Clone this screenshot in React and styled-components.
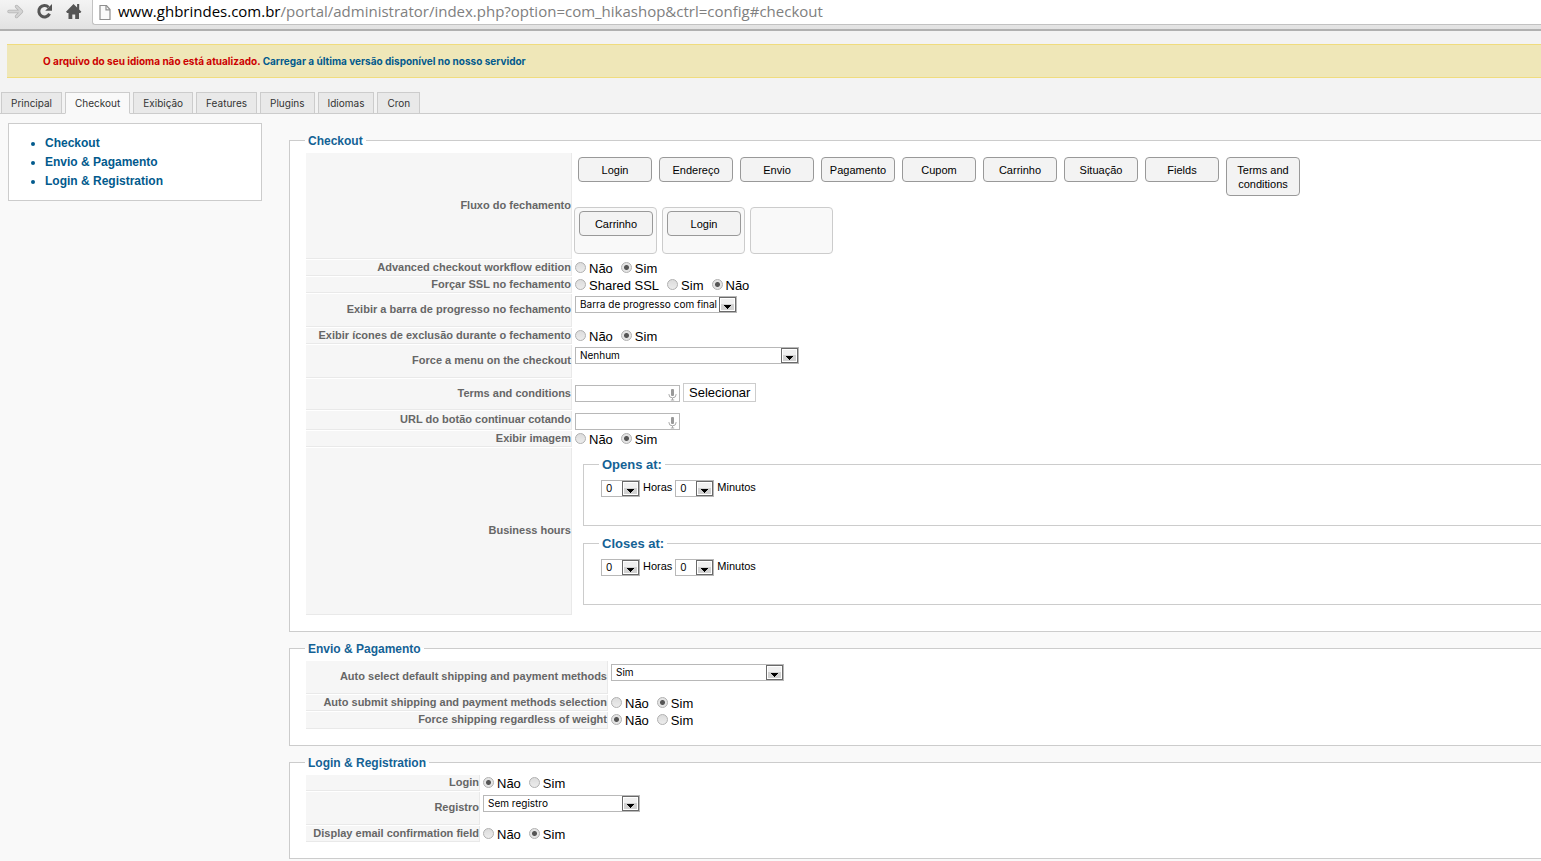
import {useId, useState} from 'react'
import styled, {createGlobalStyle} from 'styled-components'

const wideFont = 'Inter, "Liberation Sans", sans-serif'

const GlobalStyle = createGlobalStyle`
  * {
    box-sizing: border-box;
  }

  body {
    margin: 0;
    background: #f9f9f9;
    color: #000;
    font-family: "Liberation Sans", Arial, sans-serif;
    font-size: 11px;
    overflow-x: hidden;
  }

  button, input, select {
    font-family: inherit;
    margin: 0;
  }
`

const Toolbar = styled.div`
  display: flex;
  align-items: flex-start;
  height: 31px;
  padding-left: 7px;
  background: linear-gradient(#f4f4f4, #e2e2e2);
  border-bottom: 2px solid #b0b0b0;
`

const ToolButton = styled.button`
  width: 17px;
  height: 24px;
  margin-right: 12px;
  padding: 0;
  border: 0;
  background: none;

  svg {
    display: block;
  }
`

const AddressBar = styled.div`
  flex: 1;
  display: flex;
  align-items: center;
  gap: 7px;
  height: 25px;
  margin-left: -2px;
  padding-left: 6px;
  background: #fff;
  border: 1px solid #c2c2c2;
  border-width: 0 0 1px 1px;
  border-radius: 0 0 0 3px;
`

const Address = styled.div`
  padding-bottom: 2px;
  color: #808080;
  font-family: "Open Sans", "Noto Sans", sans-serif;
  font-size: 15px;
  line-height: 22px;
  white-space: nowrap;

  span {
    color: #000;
  }
`

const Header = styled.header`
  padding-top: 13px;
  background: #f3f3f3;
`

const Warning = styled.div`
  margin-left: 7px;
  padding: 0 36px;
  background: #efe7b8;
  border: 1px solid #f0dc7e;
  border-width: 1px 0;
  color: #c00;
  font-family: ${wideFont};
  font-size: 10px;
  font-weight: bold;
  line-height: 32px;

  a {
    color: #025a8d;
    text-decoration: none;
  }
`

const Tabs = styled.div`
  display: flex;
  gap: 3px;
  margin-top: 14px;
  padding-left: 1px;
  border-bottom: 1px solid #ccc;
`

const Tab = styled.button`
  height: 22px;
  margin-bottom: -1px;
  padding: 0 9px;
  background: ${props => props.$active ? '#f9f9f9' : '#e9e9e9'};
  border: 1px solid #ccc;
  border-bottom-color: ${props => props.$active ? '#f9f9f9' : '#ccc'};
  color: #333;
  font-family: ${wideFont};
  font-size: 10px;
`

const Content = styled.main`
  display: flex;
  align-items: flex-start;
  gap: 27px;
  padding: 9px 0 2px 8px;
`

const Sidebar = styled.nav`
  flex: 0 0 254px;
  background: #fff;
  border: 1px solid #ccc;

  ul {
    margin: 0;
    padding: 10px 0 9px 36px;
  }

  li {
    color: #025a8d;
    font-size: 12px;
    font-weight: bold;
    line-height: 19px;
  }

  a {
    color: #025a8d;
    text-decoration: none;
  }
`

const Sections = styled.form`
  flex: 1;
  min-width: 0;
  display: flex;
  flex-direction: column;
  gap: 9px;
  padding-top: 10px;
`

const Section = styled.fieldset`
  min-width: 0;
  margin: 0;
  padding: 4px 0 15px 15px;
  background: #fff;
  border: 1px solid #ccc;
  border-right: 0;

  legend {
    padding: 1px 3px 0;
    color: #146295;
    font-size: 12px;
    font-weight: bold;
    line-height: 14px;
  }
`

const Table = styled.table`
  width: 100%;
  border-collapse: separate;
  border-spacing: 1px;
`

const Row = styled.tr`
  height: ${props => props.$height}px;
`

const LabelCell = styled.th`
  width: ${props => props.$width}px;
  padding: 0 0 1px;
  background: #f6f6f6;
  border: 1px solid #e9e9e9;
  border-width: 0 1px 1px 0;
  color: #666;
  font-size: 11px;
  font-weight: bold;
  line-height: 13px;
  text-align: right;
  white-space: nowrap;
`

const ValueCell = styled.td`
  padding: ${props => props.$top || 0}px 0 0 2px;
  vertical-align: top;
`

const Radios = styled.div`
  display: flex;
  gap: 8px;
  height: 16px;
`

const RadioLabel = styled.label`
  display: flex;
  align-items: flex-start;
  gap: 3px;
  font-size: 13px;
  line-height: 18px;
`

const Radio = styled.input`
  appearance: none;
  width: 11px;
  height: 11px;
  margin-top: 2px;
  border: 1px solid #b0b0b0;
  border-radius: 50%;
  background: linear-gradient(#dcdcdc, #ececec);

  &:checked {
    background: radial-gradient(circle, #555 0 2px, #e4e4e4 3px);
  }
`

const SelectBox = styled.span`
  position: relative;
  display: inline-block;
  width: ${props => props.$width}px;
  height: 17px;

  select {
    display: block;
    appearance: none;
    width: 100%;
    height: 17px;
    padding: 0 18px 0 4px;
    background: #fff;
    border: 1px solid #b8b8b8;
    border-radius: 0;
    color: #000;
    font-family: ${wideFont};
    font-size: 10px;
    line-height: 15px;
  }

  svg {
    position: absolute;
    top: 1px;
    right: 1px;
    pointer-events: none;
  }
`

const FieldLine = styled.div`
  display: flex;
  align-items: flex-end;
  gap: 3px;
`

const TextBox = styled.span`
  position: relative;
  width: 105px;
  height: 17px;

  input {
    display: block;
    width: 100%;
    height: 17px;
    padding: 0 16px 0 4px;
    border: 1px solid #b8b8b8;
    font-size: 11px;
  }

  svg {
    position: absolute;
    top: 4px;
    right: 3px;
  }
`

const PlainButton = styled.button`
  height: 19px;
  padding: 0 5px;
  background: #fff;
  border: 1px solid #ccc;
  font-size: 13px;
  line-height: 17px;
`

const Steps = styled.div`
  display: flex;
  flex-wrap: wrap;
  align-items: flex-start;
  gap: 7px;
  min-height: 50px;
  padding-left: 3px;
`

const Step = styled.button`
  display: block;
  width: 74px;
  padding: 5px 6px 4px;
  background: #f3f3f3;
  border: 1px solid #999;
  border-radius: 4px;
  color: #000;
  font-size: 11px;
  line-height: 14px;
`

const Flow = styled.div`
  display: flex;
  gap: 5px;
  margin-left: -1px;
`

const DropZone = styled.div`
  width: 83px;
  height: 47px;
  padding: 3px 4px;
  background: #f9f9f9;
  border: 1px solid #ccc;
  border-radius: 4px;
`

const HoursGroup = styled.fieldset`
  min-width: 0;
  height: 70px;
  margin: 0 -1px 9px 8px;
  padding: 7px 0 0 15px;
  border: 1px solid #ccc;
  border-right: 0;

  legend {
    padding: 0 3px;
    color: #146295;
    font-size: 13px;
    font-weight: bold;
    line-height: 17px;
  }
`

const HoursLine = styled.div`
  display: flex;
  gap: 3px;
  padding-left: 2px;
  font-size: 11px;
  line-height: 15px;
`

const ForwardIcon = () => (
  <svg width="17" height="24" viewBox="0 0 17 24">
    <path d="M2 11.5h12M9.5 6.5l5 5-5 5" fill="none" stroke="#b5b5b5" strokeWidth="3.4" strokeLinecap="round" strokeLinejoin="round" />
    <path d="M2 11.5h12M9.5 6.5l5 5-5 5" fill="none" stroke="#d4d4d4" strokeWidth="1.8" strokeLinecap="round" strokeLinejoin="round" />
  </svg>
)

const ReloadIcon = () => (
  <svg width="17" height="24" viewBox="0 0 17 24">
    <path d="M12.6 7.2A5.7 5.7 0 1 0 13.6 13.8" fill="none" stroke="#555" strokeWidth="3" />
    <path d="M16 4v6.8H9.2z" fill="#555" />
  </svg>
)

const HomeIcon = () => (
  <svg width="17" height="24" viewBox="0 0 17 24">
    <path d="M8.5 4L1 11.8l1.2 1.2h1.3v6h3.8v-4.6h2.9V19H14v-6h1.2l1.2-1.2-2.2-2.3V4h-2.1v3.4z" fill="#555" />
  </svg>
)

const PageIcon = () => (
  <svg width="12" height="17" viewBox="0 0 12 17">
    <path d="M1 1.5h6.5l3.5 4v10H1z" fill="#fafafa" stroke="#8f8f8f" strokeWidth="1.2" />
    <path d="M7 1.5v4.4h4" fill="none" stroke="#8f8f8f" strokeWidth="1.2" />
  </svg>
)

const MicIcon = () => (
  <svg width="9" height="12" viewBox="0 0 9 12">
    <rect x="3" y="0" width="3" height="7" rx="1" fill="#999" />
    <path d="M1 5v.8a3.5 3 0 0 0 7 0V5M4.5 9v2M2.8 11h3.4" fill="none" stroke="#aaa" strokeWidth="1" />
  </svg>
)

const ArrowIcon = () => (
  <svg width="17" height="15" viewBox="0 0 17 15">
    <rect x=".5" y=".5" width="16" height="14" fill="#fff" stroke="#6a6a6a" />
    <rect x="2" y="2" width="13" height="5" fill="#f0f0f0" />
    <rect x="2" y="7" width="13" height="6" fill="#d2d2d2" />
    <path d="M5 8h7v1h-1v1h-1v1H9v1H8v-1H7v-1H6V9H5z" fill="#000" />
  </svg>
)

const Select = ({value, width, label, id}) => (
  <SelectBox $width={width}>
    <select id={id} aria-label={label}>
      <option>{value}</option>
    </select>
    <ArrowIcon />
  </SelectBox>
)

const RadioGroup = ({options, checked, label}) => {
  const name = useId()
  const [value, setValue] = useState(checked)

  return (
    <Radios role="radiogroup" aria-label={label}>
      {options.map(option =>
        <RadioLabel key={option}>
          <Radio type="radio" name={name} checked={value === option} onChange={() => setValue(option)} />
          {option}
        </RadioLabel>
      )}
    </Radios>
  )
}

const TextField = ({id}) => (
  <TextBox>
    <input id={id} type="text" />
    <MicIcon />
  </TextBox>
)

const Field = ({label, labelWidth, height, top, htmlFor, children}) => (
  <Row $height={height}>
    <LabelCell scope="row" $width={labelWidth}>
      {htmlFor ? <label htmlFor={htmlFor}>{label}</label> : label}
    </LabelCell>
    <ValueCell $top={top}>{children}</ValueCell>
  </Row>
)

const RadioField = ({label, labelWidth, checked, options = ['Não', 'Sim'], height = 16}) => (
  <Field label={label} labelWidth={labelWidth} height={height}>
    <RadioGroup label={label} options={options} checked={checked} />
  </Field>
)

const SelectField = ({id, label, labelWidth, value, width, top = 3}) => (
  <Field label={label} labelWidth={labelWidth} height={33} top={top} htmlFor={id}>
    <Select id={id} value={value} width={width} />
  </Field>
)

const Hours = ({title}) => (
  <HoursGroup>
    <legend>{title}</legend>
    <HoursLine>
      <Select value="0" width={39} label={`${title} horas`} />
      Horas
      <Select value="0" width={39} label={`${title} minutos`} />
      Minutos
    </HoursLine>
  </HoursGroup>
)

const tabs = ['Principal', 'Checkout', 'Exibição', 'Features', 'Plugins', 'Idiomas', 'Cron']

const steps = ['Login', 'Endereço', 'Envio', 'Pagamento', 'Cupom', 'Carrinho', 'Situação', 'Fields', 'Terms and conditions']

const CheckoutSection = () => (
  <Section id="checkout">
    <legend>Checkout</legend>
    <Table>
      <tbody>
        <Field label="Fluxo do fechamento" labelWidth={266} height={106} top={4}>
          <Steps>
            {steps.map(step => <Step type="button" key={step}>{step}</Step>)}
          </Steps>
          <Flow>
            <DropZone><Step type="button">Carrinho</Step></DropZone>
            <DropZone><Step type="button">Login</Step></DropZone>
            <DropZone />
          </Flow>
        </Field>
        <RadioField label="Advanced checkout workflow edition" checked="Sim" />
        <RadioField label="Forçar SSL no fechamento" options={['Shared SSL', 'Sim', 'Não']} checked="Não" />
        <SelectField id="bar" label="Exibir a barra de progresso no fechamento" value="Barra de progresso com final" width={162} top={2} />
        <RadioField label="Exibir ícones de exclusão durante o fechamento" checked="Sim" />
        <SelectField id="menu" label="Force a menu on the checkout" value="Nenhum" width={224} top={2} />
        <Field label="Terms and conditions" height={31} top={4} htmlFor="terms">
          <FieldLine>
            <TextField id="terms" />
            <PlainButton type="button">Selecionar</PlainButton>
          </FieldLine>
        </Field>
        <Field label="URL do botão continuar cotando" height={19} top={2} htmlFor="url">
          <FieldLine><TextField id="url" /></FieldLine>
        </Field>
        <RadioField label="Exibir imagem" checked="Sim" />
        <Field label="Business hours" height={167} top={8}>
          <Hours title="Opens at:" />
          <Hours title="Closes at:" />
        </Field>
      </tbody>
    </Table>
  </Section>
)

const ShippingSection = () => (
  <Section id="shipping">
    <legend>Envio &amp; Pagamento</legend>
    <Table>
      <tbody>
        <SelectField id="auto" label="Auto select default shipping and payment methods" labelWidth={302} value="Sim" width={173} />
        <RadioField label="Auto submit shipping and payment methods selection" checked="Sim" />
        <RadioField label="Force shipping regardless of weight" checked="Não" height={17} />
      </tbody>
    </Table>
  </Section>
)

const LoginSection = () => (
  <Section id="login">
    <legend>Login &amp; Registration</legend>
    <Table>
      <tbody>
        <RadioField label="Login" labelWidth={174} checked="Não" />
        <SelectField id="register" label="Registro" value="Sem registro" width={157} />
        <RadioField label="Display email confirmation field" checked="Sim" />
      </tbody>
    </Table>
  </Section>
)

const App = () => {
  const [active, setActive] = useState('Checkout')

  return (
    <>
      <GlobalStyle />
      <Toolbar>
        <ToolButton aria-label="Forward"><ForwardIcon /></ToolButton>
        <ToolButton aria-label="Reload"><ReloadIcon /></ToolButton>
        <ToolButton aria-label="Home"><HomeIcon /></ToolButton>
        <AddressBar>
          <PageIcon />
          <Address>
            <span>www.ghbrindes.com.br</span>/portal/administrator/index.php?option=com_hikashop&amp;ctrl=config#checkout
          </Address>
        </AddressBar>
      </Toolbar>
      <Header>
        <Warning>
          O arquivo do seu idioma não está atualizado. <a href="#update">Carregar a última versão disponível no nosso servidor</a>
        </Warning>
        <Tabs role="tablist">
          {tabs.map(tab =>
            <Tab key={tab} role="tab" aria-selected={tab === active} $active={tab === active} onClick={() => setActive(tab)}>
              {tab}
            </Tab>
          )}
        </Tabs>
      </Header>
      <Content>
        <Sidebar>
          <ul>
            <li><a href="#checkout">Checkout</a></li>
            <li><a href="#shipping">Envio &amp; Pagamento</a></li>
            <li><a href="#login">Login &amp; Registration</a></li>
          </ul>
        </Sidebar>
        <Sections>
          <CheckoutSection />
          <ShippingSection />
          <LoginSection />
        </Sections>
      </Content>
    </>
  )
}

export default App
